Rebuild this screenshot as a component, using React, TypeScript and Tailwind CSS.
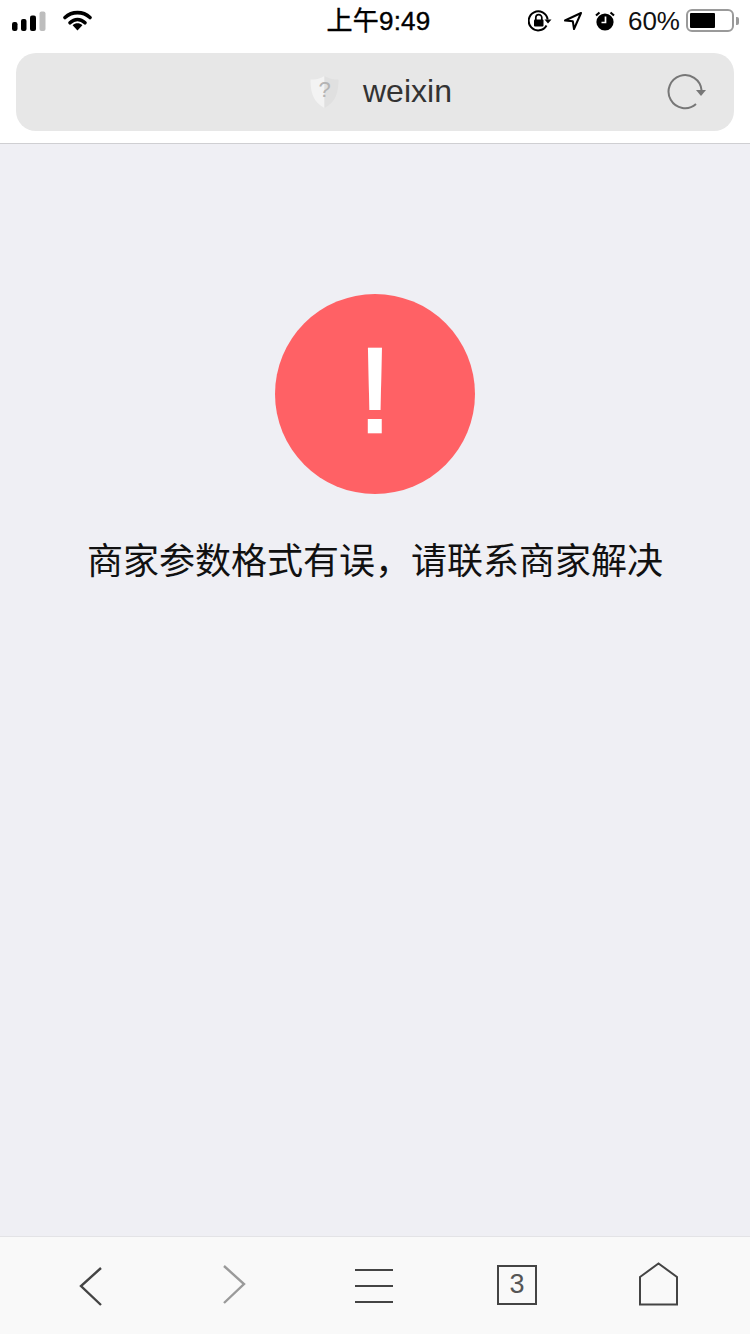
const sans = "font-['Liberation_Sans','Noto_Sans_CJK_SC',sans-serif]";

function Signal() {
  return (
    <svg width="34" height="20" viewBox="0 0 34 20" className="block">
      <rect x="0" y="11" width="5.5" height="9" rx="2.2" fill="#000" />
      <rect x="9" y="8" width="5.5" height="12" rx="2" fill="#000" />
      <rect x="18" y="4.5" width="6" height="15.5" rx="2" fill="#000" />
      <rect x="27.5" y="0.5" width="6" height="19.5" rx="2" fill="#bdbdbd" />
    </svg>
  );
}

function Wifi() {
  return (
    <svg width="29" height="21" viewBox="0 0 29 21" className="block">
      <path d="M2 7.5 C9 1 20 1 27 7.5" fill="none" stroke="#000" strokeWidth="3.6" strokeLinecap="round" />
      <path d="M7 12.8 C11.5 8.4 17.5 8.4 22 12.8" fill="none" stroke="#000" strokeWidth="3.6" strokeLinecap="round" />
      <path d="M9.6 15.2 C12.5 12.6 16.5 12.6 19.4 15.2 L14.5 20.5 Z" fill="#000" />
    </svg>
  );
}

function RotationLock() {
  return (
    <svg width="24" height="22" viewBox="0 0 24 22" className="block">
      <path d="M18.5 15.5 A9.5 9.5 0 1 1 19.6 9.5" fill="none" stroke="#000" strokeWidth="2" />
      <path d="M16.5 9.5 H23.5 L20 13.5 Z" fill="#000" />
      <rect x="6" y="9.5" width="9.5" height="7" rx="1" fill="#000" />
      <path d="M7.8 10 V7.6 A3 3 0 0 1 13.8 7.6 V10" fill="none" stroke="#000" strokeWidth="1.7" />
    </svg>
  );
}

function LocationArrow() {
  return (
    <svg width="20" height="20" viewBox="0 0 20 20" className="block">
      <path d="M18 2 L2 9.5 L9.8 10.2 L11 18 Z" fill="none" stroke="#000" strokeWidth="2" strokeLinejoin="round" />
    </svg>
  );
}

function Alarm() {
  return (
    <svg width="20" height="20" viewBox="0 0 20 20" className="block">
      <circle cx="10" cy="11" r="8.6" fill="#000" />
      <path d="M1 4.5 L4.5 1.5 M19 4.5 L15.5 1.5" stroke="#000" strokeWidth="2.2" />
      <path d="M10.5 5.5 V11.5 H6.5" fill="none" stroke="#fff" strokeWidth="1.7" />
    </svg>
  );
}

function Battery() {
  return (
    <div className="flex items-center">
      <div className="w-[48px] h-[23px] rounded-[6px] border-2 border-[#9a9a9a] p-[2px]">
        <div className="h-full w-[25px] bg-black rounded-[1px]" />
      </div>
      <div className="ml-[2px] w-[3px] h-[8px] bg-[#9a9a9a] rounded-r-[2px]" />
    </div>
  );
}

function Shield() {
  return (
    <div className="relative w-[31px] h-[34px] flex items-center justify-center">
      <svg width="31" height="34" viewBox="0 0 31 34" className="absolute inset-0">
        <path d="M15.5 1 C11 4 6 4.5 1.5 4.5 C1.5 17 4 27 15.5 33 Z" fill="#f3f3f3" />
        <path d="M15.5 1 C20 4 25 4.5 29.5 4.5 C29.5 17 27 27 15.5 33 Z" fill="#e0e0e0" />
      </svg>
      <span className="relative text-[22px] leading-none text-[#b4b4b4] -mt-[5px]">?</span>
    </div>
  );
}

function Reload() {
  return (
    <svg width="40" height="36" viewBox="0 0 40 36" className="block">
      <path d="M34.5 16 A16.5 16.5 0 1 0 29 30" fill="none" stroke="#777" strokeWidth="2" />
      <path d="M29 16 H39 L34 22 Z" fill="#777" />
    </svg>
  );
}

export default function App() {
  return (
    <div className={`w-[750px] h-[1334px] flex flex-col bg-[#efeff4] overflow-hidden ${sans}`}>
      <header className="h-[144px] shrink-0 bg-white border-b border-[#cfcfd2] flex flex-col">
        <div className="h-[41px] pl-[12px] pr-[11px] grid grid-cols-[1fr_auto_1fr] items-center">
          <div className="flex items-center gap-[17px]">
            <Signal />
            <Wifi />
          </div>
          <div className="text-[26px] leading-[26px] text-black [-webkit-text-stroke:0.4px_black] tracking-[0.2px] ml-[6px]">上午9:49</div>
          <div className="flex items-center justify-end">
            <RotationLock />
            <div className="ml-[11px]"><LocationArrow /></div>
            <div className="ml-[12px]"><Alarm /></div>
            <span className="ml-[13px] text-[26px] leading-[26px] text-[#111] mr-[-1px]">60%</span>
            <div className="ml-[7px]"><Battery /></div>
          </div>
        </div>
        <div className="mt-[12px] mx-[16px] h-[78px] rounded-[20px] bg-[#e7e7e7] flex items-center pl-[293px] pr-[27px]">
          <Shield />
          <span className="ml-[23px] text-[32px] leading-none text-[#333] -mt-[2px]">weixin</span>
          <div className="ml-auto"><Reload /></div>
        </div>
      </header>

      <main className="flex-1 flex flex-col items-center pt-[150px]">
        <div className="w-[200px] h-[200px] rounded-full bg-[#ff6165] flex items-center justify-center">
          <span className="text-[120px] leading-none text-white [-webkit-text-stroke:2.5px_white] -mt-[9px]">!</span>
        </div>
        <p className="mt-[47px] text-[36px] leading-[42px] text-[#111] whitespace-nowrap">商家参数格式有误，请联系商家解决</p>
      </main>

      <footer className="h-[98px] shrink-0 bg-[#f9f9f9] border-t border-[#e3e3e6] flex items-center pl-[79px]">
        <svg width="24" height="40" viewBox="0 0 24 40" className="block">
          <path d="M22 2 L2 20 L22 39" fill="none" stroke="#444" strokeWidth="2.4" />
        </svg>
        <svg width="24" height="40" viewBox="0 0 24 40" className="block ml-[119px] -mt-[1px]">
          <path d="M2 1 L22 19 L2 38" fill="none" stroke="#9a9a9a" strokeWidth="2.4" />
        </svg>
        <div className="ml-[109px] w-[38px] h-[34px] flex flex-col justify-between">
          <div className="h-[2px] bg-[#444]" />
          <div className="h-[2px] bg-[#444]" />
          <div className="h-[2px] bg-[#444]" />
        </div>
        <div className="ml-[104px] w-[40px] h-[40px] -mt-[2px] border-2 border-[#444] flex items-center justify-center text-[27px] leading-none text-[#555]">3</div>
        <svg width="41" height="44" viewBox="0 0 41 44" className="block ml-[101px] -mt-[4px]">
          <path d="M2 15 L20.5 1.5 L39 15 V42.5 H2 Z" fill="none" stroke="#444" strokeWidth="2" />
        </svg>
      </footer>
    </div>
  );
}
